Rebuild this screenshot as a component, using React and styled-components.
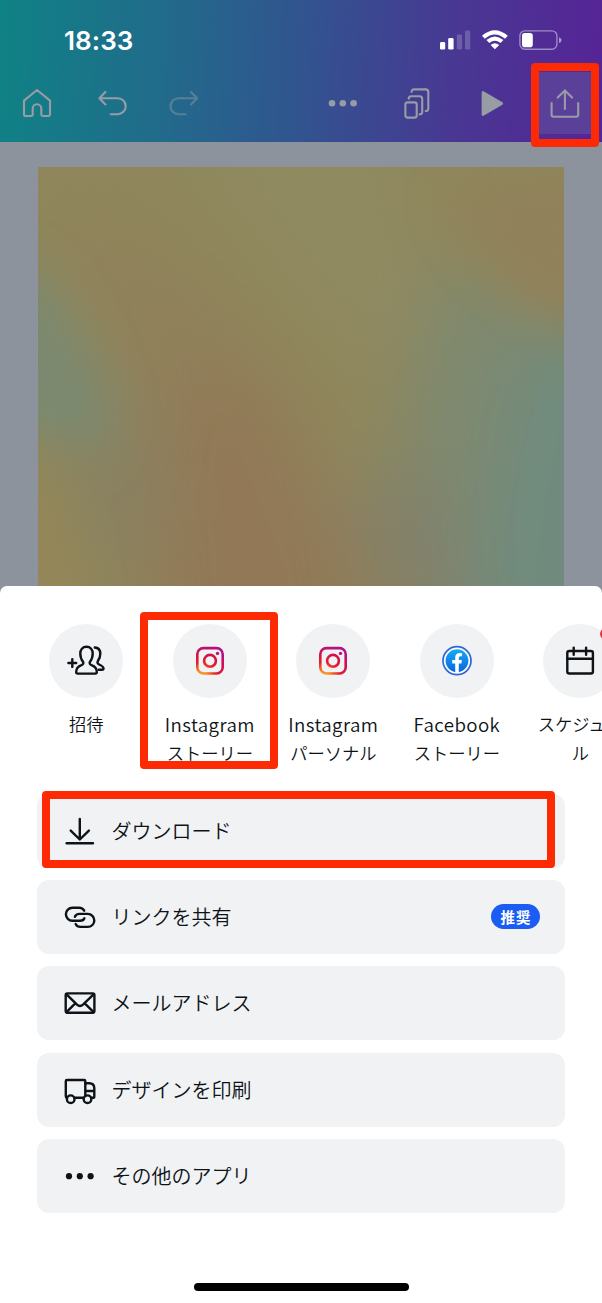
import styled, { createGlobalStyle } from "styled-components";

const shareTargets = [
  { id: "invite", lines: ["招待"], icon: <InviteIcon /> },
  { id: "ig-story", lines: ["Instagram", "ストーリー"], icon: <InstagramIcon id="igStory" /> },
  { id: "ig-personal", lines: ["Instagram", "パーソナル"], icon: <InstagramIcon id="igPersonal" /> },
  { id: "fb-story", lines: ["Facebook", "ストーリー"], icon: <FacebookIcon /> },
  { id: "schedule", lines: ["スケジュー", "ル"], icon: <CalendarIcon />, badge: true },
];

const actions = [
  { id: "download", label: "ダウンロード", icon: <DownloadIcon /> },
  { id: "link", label: "リンクを共有", icon: <LinkIcon />, tag: "推奨" },
  { id: "mail", label: "メールアドレス", icon: <MailIcon /> },
  { id: "print", label: "デザインを印刷", icon: <TruckIcon /> },
  { id: "more", label: "その他のアプリ", icon: <MoreIcon /> },
];

function App() {
  return (
    <Screen>
      <GlobalStyle />
      <Header>
        <StatusBar>
          <Time>18:33</Time>
          <StatusIcons />
        </StatusBar>
        <Toolbar>
          <Tool $width={74}>
            <ToolSvg width="30" height="30">
              <path d="M2 12.6 15 2 28 12.6V26.6Q28 28 26.6 28H20.6Q19.3 28 19.3 26.6V20.6a4.3 4.3 0 0 0-8.6 0V26.6Q10.7 28 9.4 28H3.4Q2 28 2 26.6Z" />
            </ToolSvg>
          </Tool>
          <Tool $width={77}>
            <ToolSvg width="30" height="26">
              <path d="M7.4 2 1.4 8.2 7.4 14.4M1.4 8.2H19.7a8 8 0 0 1 0 16H12.7" />
            </ToolSvg>
          </Tool>
          <Tool $width={65} $dim>
            <ToolSvg width="30" height="26">
              <path d="M22 2 28.2 8.2 22 14.4M28.2 8.2H9.5a8 8 0 0 0 0 16H16.5" />
            </ToolSvg>
          </Tool>
          <ToolSpacer />
          <Tool $width={74}>
            <ToolSvg width="30" height="8" $solid>
              <circle cx="4" cy="4.3" r="3.3" />
              <circle cx="14.8" cy="4.3" r="3.3" />
              <circle cx="25.6" cy="4.3" r="3.3" />
            </ToolSvg>
          </Tool>
          <Tool $width={74}>
            <ToolSvg width="27" height="32">
              <rect x="1.4" y="15.4" width="11.3" height="15.2" rx="2.2" />
              <path d="M4.7 11.8Q4.7 9.2 7.2 9.2H15.6Q18.2 9.2 18.2 11.8V25Q18.2 27.4 15.6 27.4" />
              <path d="M7.6 5Q7.6 2.4 10.2 2.4H21.7Q24.3 2.4 24.3 5V21.4Q24.3 24 21.7 24" />
            </ToolSvg>
          </Tool>
          <Tool $width={76}>
            <ToolSvg width="24" height="27" $solid>
              <path d="M1.6 3Q1.6 .2 4 1.5L22 12Q24.2 13.4 22 14.9L4 25.5Q1.6 26.8 1.6 24Z" />
            </ToolSvg>
          </Tool>
          <ShareTool>
            <ToolSvg width="30" height="30">
              <path d="M14.9 21V2.4M7.7 9.6 14.9 2.4 22.1 9.6M1.6 15V26.7Q1.6 28.7 3.6 28.7H26.2Q28.2 28.7 28.2 26.7V15" />
            </ToolSvg>
          </ShareTool>
        </Toolbar>
      </Header>

      <Workspace>
        <Artwork />
      </Workspace>

      <Sheet>
        <Targets>
          {shareTargets.map(({ id, lines, icon, badge }) => (
            <Target key={id}>
              <Bubble>
                {icon}
                {badge && <Dot />}
              </Bubble>
              <TargetLabel>
                {lines.map((line) => (
                  <TargetLine key={line} $latin={/^[A-Z]/.test(line)}>
                    {line}
                  </TargetLine>
                ))}
              </TargetLabel>
            </Target>
          ))}
        </Targets>
        <Actions>
          {actions.map(({ id, label, icon, tag }) => (
            <Action key={id}>
              {icon}
              <ActionLabel>{label}</ActionLabel>
              {tag && <Tag>{tag}</Tag>}
            </Action>
          ))}
        </Actions>
        <HomeIndicator />
      </Sheet>

      <Highlight $x={530.5} $y={63} $w={68.5} $h={84} />
      <Highlight $x={139.5} $y={612} $w={138.5} $h={157} />
      <Highlight $x={42.3} $y={791} $w={513.2} $h={77.3} />
    </Screen>
  );
}

function StatusIcons() {
  return (
    <svg width="124" height="22" viewBox="439 29 124 22" fill="#fff">
      <rect x="440" y="42" width="5.2" height="7.6" rx="1.4" />
      <rect x="448.2" y="38" width="5.4" height="11.6" rx="1.4" />
      <rect x="456.8" y="34.6" width="5.2" height="15" rx="1.4" opacity=".2" />
      <rect x="465" y="30.6" width="5.2" height="19" rx="1.4" opacity=".2" />
      <path d="M482 35.7Q494.8 24.6 507.8 35.7L505 38.8Q494.8 30.3 484.8 38.8Z" />
      <path d="M486.4 40Q494.8 33 503.4 40L500.4 43Q494.8 38.7 489.4 43Z" />
      <path d="M490.6 45Q494.8 41.7 499.2 45L494.9 49.3Z" />
      <rect x="519.9" y="30.9" width="37" height="18.4" rx="5" fill="none" stroke="#fff" strokeOpacity=".45" strokeWidth="1.4" />
      <rect x="522" y="33" width="10.8" height="14.2" rx="2.8" />
      <path d="M559 37.2Q561.6 38 561.6 40.1Q561.6 42.4 559 43.1Z" opacity=".5" />
    </svg>
  );
}

// soft colour blobs on the page being edited
function Artwork() {
  return (
    <ArtSvg viewBox="0 0 526 419" preserveAspectRatio="none">
      <defs>
        <filter id="soft" x="-60%" y="-60%" width="220%" height="220%">
          <feGaussianBlur stdDeviation="34" />
        </filter>
        <filter id="softer" x="-60%" y="-60%" width="220%" height="220%">
          <feGaussianBlur stdDeviation="22" />
        </filter>
      </defs>
      <rect width="526" height="419" fill="#8f865b" />
      <g filter="url(#soft)">
        <path d="M20 40 150 110 260 230 330 419 110 419 110 240 60 130Z" fill="#90805a" />
        <path d="M130 -50H360L390 130 340 220 270 140Z" fill="#908a60" />
        <path d="M400 90 560 180V480H370L350 330Z" fill="#7e8970" />
        <path d="M140 200 210 210 310 400 350 500H80L140 360Z" fill="#927856" />
        <path d="M50 220 90 230 110 340 90 420 50 360Z" fill="#868065" />
        <path d="M490 170 600 160V500H430L450 340Z" fill="#6f8b7e" />
        <path d="M310 330 400 300 430 480H370Z" fill="#82806a" />
      </g>
      <g filter="url(#softer)">
        <path d="M-40 90 10 110 50 180 75 240 60 290 10 270 -40 250Z" fill="#7b8970" />
        <path d="M410 30 570 0V165L490 130 440 80Z" fill="#91815a" />
        <path d="M-40 290 0 305 30 360 50 480H-40Z" fill="#948659" />
      </g>
    </ArtSvg>
  );
}

function InviteIcon() {
  return (
    <LineSvg width="40" height="32">
      <path d="M20.5 1.7C16.5 1.7 14.3 4.7 14.3 8.5 14.3 12 15.3 14.6 17 16.7 17.8 18 17.3 19.4 15.5 20.1 12 21.3 10.2 23 10.2 27Q10.2 28.6 11.8 28.6H29.2Q30.8 28.6 30.8 27C30.8 23 29 21.3 25.5 20.1 23.7 19.4 23.2 18 24 16.7 25.7 14.6 26.7 12 26.7 8.5 26.7 4.7 24.5 1.7 20.5 1.7Z" />
      <path d="M28.8 2.5C32.5 2.7 34.3 5 34.3 8.8 34.3 12 33.3 14 32 15.8 31 17.5 31.3 18.6 33.2 19.5 36 20.8 37.5 21.7 37.5 23.5Q37.5 24.7 36 24.7H32.7" />
      <path d="M2.4 18H10.2M6.3 14.1V21.9" />
    </LineSvg>
  );
}

function InstagramIcon({ id }) {
  return (
    <svg width="30" height="30" fill="none" stroke={`url(#${id})`} strokeWidth="2.6">
      <defs>
        <radialGradient id={id} gradientUnits="userSpaceOnUse" cx="6" cy="32" r="38">
          <stop offset="0" stopColor="#fdb72c" />
          <stop offset=".18" stopColor="#f78a22" />
          <stop offset=".42" stopColor="#e3202a" />
          <stop offset=".65" stopColor="#d2104c" />
          <stop offset="1" stopColor="#a410a6" />
        </radialGradient>
      </defs>
      <rect x="2.3" y="2.1" width="25.4" height="25.4" rx="6.2" />
      <circle cx="15" cy="14.8" r="5.9" />
      <circle cx="22.5" cy="7.4" r="1.7" fill={`url(#${id})`} stroke="none" />
    </svg>
  );
}

function FacebookIcon() {
  return (
    <svg width="32" height="32">
      <defs>
        <linearGradient id="fb" x1="0" y1="0" x2="0" y2="1">
          <stop offset="0" stopColor="#18abf5" />
          <stop offset="1" stopColor="#0866dc" />
        </linearGradient>
      </defs>
      <circle cx="16" cy="15.7" r="14" fill="#fff" stroke="#2d68d4" strokeWidth="1.7" />
      <circle cx="16" cy="15.7" r="11.4" fill="url(#fb)" />
      <path
        d="M14.2 27V18.4H11.2V14.9H14.2V12.4C14.2 9.5 15.9 7.9 18.6 7.9Q19.9 7.9 21 8.2V11.2H19.4Q17.8 11.2 17.8 12.8V14.9H20.9L20.4 18.4H17.8V27Z"
        fill="#fff"
      />
    </svg>
  );
}

function CalendarIcon() {
  return (
    <LineSvg width="32" height="32">
      <rect x="3.3" y="6" width="25.6" height="22.5" rx="2" />
      <path d="M3.3 13.7H28.9M9.7 2.6V9.8M22.1 2.6V9.8" />
    </LineSvg>
  );
}

function DownloadIcon() {
  return (
    <LineSvg width="32" height="32">
      <path d="M15.8 4V24.4M6.7 15.6 15.8 24.5 24.9 15.6M2.6 28.3H29" />
    </LineSvg>
  );
}

function LinkIcon() {
  return (
    <LineSvg width="32" height="32">
      <path d="M20.2 9.7Q18.6 6.8 15.2 6.8H8.4a6.5 6.5 0 0 0 0 13H16.2Q19.4 19.8 20.4 17.3" />
      <path d="M10.9 15.8Q12 12.9 15.4 12.9H23.8a6.5 6.5 0 0 1 0 13H16.4Q13 25.9 11.6 23" />
    </LineSvg>
  );
}

function MailIcon() {
  return (
    <LineSvg width="32" height="32">
      <rect x="1.7" y="6.4" width="28.7" height="19.3" rx="1.6" />
      <path d="M2.3 7.2 13 17.6Q16 20.3 19 17.6L29.8 7.2M2.5 25.2 11 16.6M29.6 25.2 21 16.6" />
    </LineSvg>
  );
}

function TruckIcon() {
  return (
    <LineSvg width="32" height="32">
      <path d="M3 23.8Q1.8 23.6 1.8 22.2V7.2Q1.8 6 3 6H20.1Q21.3 6 21.3 7.2V22" />
      <path d="M21.3 9.2H25.2Q30.3 9.2 30.3 14.3V22.4Q30.3 23.8 28.9 23.8H27.6M21.8 17H30.3M10.7 23.8H19.4" />
      <circle cx="6.7" cy="25.2" r="3.8" />
      <circle cx="23.5" cy="25.2" r="3.8" />
    </LineSvg>
  );
}

function MoreIcon() {
  return (
    <svg width="32" height="32" fill="#0e1318">
      <circle cx="5" cy="16.2" r="3.1" />
      <circle cx="15.8" cy="16.2" r="3.1" />
      <circle cx="26.6" cy="16.2" r="3.1" />
    </svg>
  );
}

const GlobalStyle = createGlobalStyle`
  * {
    box-sizing: border-box;
  }
  body {
    margin: 0;
    background: #fff;
  }
  svg {
    display: block;
    flex: none;
  }
`;

const Screen = styled.div`
  position: relative;
  width: 602px;
  height: 1303px;
  overflow: hidden;
  display: flex;
  flex-direction: column;
  background: #8d939c;
  color: #0e1318;
  font-family: "Noto Sans CJK JP", "Noto Sans", sans-serif;
`;

const Header = styled.header`
  height: 142px;
  background: linear-gradient(93deg, #0f8285 0%, #216b8b 27%, #31548f 50%, #483893 75%, #562496 100%);
`;

const StatusBar = styled.div`
  height: 72px;
  padding: 29px 39px 0 64px;
  display: flex;
  justify-content: space-between;
  align-items: flex-start;
`;

const Time = styled.span`
  font-family: Inter, sans-serif;
  font-size: 26px;
  font-weight: 600;
  line-height: 23px;
  letter-spacing: 0.1px;
  color: #fff;
`;

const Toolbar = styled.div`
  height: 62px;
  display: flex;
`;

const Tool = styled.div`
  width: ${(props) => props.$width}px;
  display: flex;
  align-items: center;
  justify-content: center;
  opacity: ${(props) => (props.$dim ? 0.45 : 1)};
`;

const ToolSpacer = styled.div`
  width: 90px;
`;

const ShareTool = styled.div`
  width: 53px;
  margin-left: 8px;
  display: flex;
  align-items: center;
  justify-content: center;
  background: #5b409a;
`;

const ToolSvg = styled.svg`
  fill: ${(props) => (props.$solid ? "#979ca5" : "none")};
  stroke: ${(props) => (props.$solid ? "none" : "#979ca5")};
  stroke-width: 2.1;
  stroke-linecap: round;
  stroke-linejoin: round;
`;

const Workspace = styled.main`
  height: 444px;
  padding: 25px 38px 0;
`;

const ArtSvg = styled.svg`
  width: 526px;
  height: 419px;
`;

const Sheet = styled.section`
  flex: 1;
  padding-top: 38px;
  display: flex;
  flex-direction: column;
  background: #fff;
  border-radius: 7px 7px 0 0;
`;

const Targets = styled.div`
  height: 169.6px;
  padding-left: 24.6px;
  display: flex;
`;

const Target = styled.div`
  flex: none;
  width: 123.5px;
  display: flex;
  flex-direction: column;
  align-items: center;
`;

const Bubble = styled.div`
  position: relative;
  width: 74px;
  height: 74px;
  border-radius: 50%;
  background: #f1f2f4;
  display: flex;
  align-items: center;
  justify-content: center;
`;

const Dot = styled.span`
  position: absolute;
  top: 4px;
  right: 5px;
  width: 12px;
  height: 12px;
  border-radius: 50%;
  background: #e5343f;
`;

const TargetLabel = styled.div`
  margin-top: 11.4px;
  display: flex;
  flex-direction: column;
  align-items: center;
`;

const TargetLine = styled.span`
  height: 29px;
  line-height: 29px;
  font-size: ${(props) => (props.$latin ? 18.7 : 17.3)}px;
  font-weight: 350;
  letter-spacing: ${(props) => (props.$latin ? "0.4px" : "normal")};
  white-space: nowrap;
`;

const Actions = styled.div`
  padding: 0 37px;
  display: flex;
  flex-direction: column;
  gap: 12.4px;
`;

const Action = styled.div`
  height: 74px;
  padding: 0 25px 0 27px;
  display: flex;
  align-items: center;
  gap: 15.5px;
  background: #f1f2f4;
  border-radius: 12px;
`;

const ActionLabel = styled.span`
  flex: 1;
  font-size: 20px;
  font-weight: 350;
  line-height: 30px;
`;

const Tag = styled.span`
  width: 49px;
  height: 25px;
  border-radius: 13px;
  background: #1b5cf3;
  color: #fff;
  font-size: 14.5px;
  font-weight: 700;
  line-height: 25px;
  letter-spacing: 1px;
  text-indent: 1px;
  text-align: center;
`;

const HomeIndicator = styled.div`
  width: 215px;
  height: 8px;
  margin: auto 0 12px 194px;
  border-radius: 4px;
  background: #000;
`;

// red marker frames drawn over the screen
const Highlight = styled.div`
  position: absolute;
  left: ${(props) => props.$x}px;
  top: ${(props) => props.$y}px;
  width: ${(props) => props.$w}px;
  height: ${(props) => props.$h}px;
  border: 8px solid #fe2a03;
  border-radius: 4px;
`;

const LineSvg = styled.svg`
  fill: none;
  stroke: #0e1318;
  stroke-width: 2.4;
  stroke-linecap: round;
  stroke-linejoin: round;
`;

export default App;
